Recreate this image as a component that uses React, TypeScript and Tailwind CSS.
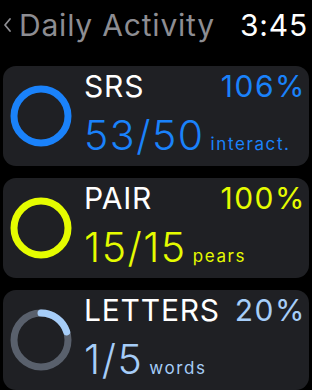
import React from "react";

type Item = {
  title: string;
  pct: string;
  value: string;
  unit: string;
  color: string;
  track: string;
  frac: number;
  textColor: string;
};

const items: Item[] = [
  { title: "SRS", pct: "106%", value: "53/50", unit: "interact.", color: "#1a82fb", track: "#1a82fb", frac: 1, textColor: "text-[#1a82fb]" },
  { title: "PAIR", pct: "100%", value: "15/15", unit: "pears", color: "#e5fc00", track: "#e5fc00", frac: 1, textColor: "text-[#e5fc00]" },
  { title: "LETTERS", pct: "20%", value: "1/5", unit: "words", color: "#a6cdf8", track: "#59606c", frac: 0.2, textColor: "text-[#a6cdf8]" },
];

function Ring({ color, track, frac }: { color: string; track: string; frac: number }) {
  const r = 27;
  const c = 2 * Math.PI * r;
  return (
    <svg width="62" height="62" viewBox="0 0 62 62" className="shrink-0">
      <circle cx="31" cy="31" r={r} fill="none" stroke={track} strokeWidth="7" />
      {frac < 1 && (
        <circle
          cx="31"
          cy="31"
          r={r}
          fill="none"
          stroke={color}
          strokeWidth="7"
          strokeLinecap="round"
          strokeDasharray={`${c * frac} ${c}`}
          transform="rotate(-90 31 31)"
        />
      )}
    </svg>
  );
}

export default function App() {
  return (
    <div className="w-[312px] h-[390px] overflow-hidden bg-black font-['Inter',sans-serif]">
      <div className="flex items-center justify-between h-[44px] pl-[3px] pr-[4px] pt-[5px]">
        <div className="flex items-center gap-[7px]">
          <svg width="9" height="16" viewBox="0 0 9 16">
            <path d="M7 2 L2 8 L7 14" fill="none" stroke="#8d8d92" strokeWidth="1.8" strokeLinecap="round" strokeLinejoin="round" />
          </svg>
          <span className="text-[30px] leading-none text-[#8d8d92] tracking-[0.8px]">Daily Activity</span>
        </div>
        <span className="text-[30px] leading-none text-white tracking-[0.8px]">3:45</span>
      </div>
      <div className="flex flex-col gap-[12px] px-[3px] pt-[22px]">
        {items.map((it) => (
          <div key={it.title} className="flex items-center h-[100px] rounded-[13px] bg-[#1f2024] pl-[7px] pr-[3px] gap-[12px]">
            <Ring color={it.color} track={it.track} frac={it.frac} />
            <div className="flex-1 flex flex-col gap-[14px] pb-[5px]">
              <div className="flex items-baseline justify-between">
                <span className="text-[30px] leading-none text-white tracking-[0.8px]">{it.title}</span>
                <span className={`text-[30px] leading-none tracking-[1.5px] ${it.textColor}`}>{it.pct}</span>
              </div>
              <div className={`flex items-baseline gap-[6px] ${it.textColor}`}>
                <span className="text-[41px] leading-none font-[350] tracking-[1.5px]">{it.value}</span>
                <span className="text-[17px] leading-none tracking-[1.6px]">{it.unit}</span>
              </div>
            </div>
          </div>
        ))}
      </div>
    </div>
  );
}
